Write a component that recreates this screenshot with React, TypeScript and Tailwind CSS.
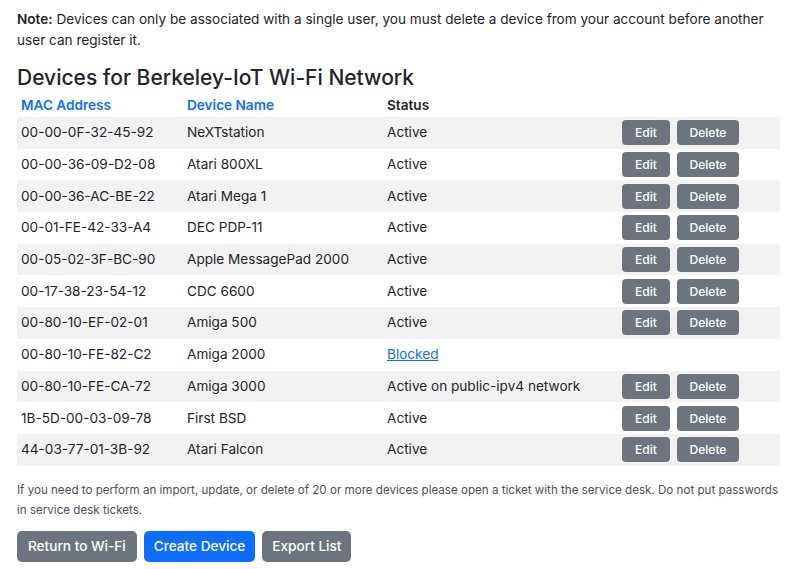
import React from "react";

const rows: [string, string, string][] = [
  ["00-00-0F-32-45-92", "NeXTstation", "Active"],
  ["00-00-36-09-D2-08", "Atari 800XL", "Active"],
  ["00-00-36-AC-BE-22", "Atari Mega 1", "Active"],
  ["00-01-FE-42-33-A4", "DEC PDP-11", "Active"],
  ["00-05-02-3F-BC-90", "Apple MessagePad 2000", "Active"],
  ["00-17-38-23-54-12", "CDC 6600", "Active"],
  ["00-80-10-EF-02-01", "Amiga 500", "Active"],
  ["00-80-10-FE-82-C2", "Amiga 2000", "Blocked"],
  ["00-80-10-FE-CA-72", "Amiga 3000", "Active on public-ipv4 network"],
  ["1B-5D-00-03-09-78", "First BSD", "Active"],
  ["44-03-77-01-3B-92", "Atari Falcon", "Active"],
];

export default function App() {
  return (
    <div className="px-[17px] pt-[9px] text-[13.6px] leading-[21px] text-[#212529]" style={{ fontFamily: "Inter, 'Noto Sans', sans-serif" }}>
      <p>
        <b className="font-semibold">Note:</b> Devices can only be associated with a single user, you must delete a device from your account before another user can register it.
      </p>
      <h2 className="mt-[14px] text-[21px] leading-[26px] font-medium">Devices for Berkeley-IoT Wi-Fi Network</h2>
      <table className="mt-[3px] w-[763px] border-collapse">
        <thead>
          <tr className="h-[23px] text-left font-semibold">
            <th className="w-[166px] px-1 py-0 font-semibold text-[#0d6efd]">MAC Address</th>
            <th className="w-[200px] px-1 py-0 font-semibold text-[#0d6efd]">Device Name</th>
            <th className="w-[235px] px-1 py-0 font-semibold">Status</th>
            <th></th>
          </tr>
        </thead>
        <tbody>
          {rows.map((r, i) => (
            <tr key={i} className={`h-[31.7px] ${i % 2 === 0 ? "bg-[#f2f2f2]" : ""}`}>
              <td className="px-1">{r[0]}</td>
              <td className="px-1">{r[1]}</td>
              <td className="px-1">
                {r[2] === "Blocked" ? <a className="text-[#0d6efd] underline">Blocked</a> : r[2]}
              </td>
              <td className="px-1">
                {r[2] !== "Blocked" && (
                  <div className="flex gap-[7px]">
                    <button className="h-[25px] w-[48px] rounded-[4px] bg-[#6c757d] text-[12px] font-medium text-white">Edit</button>
                    <button className="h-[25px] w-[62px] rounded-[4px] bg-[#6c757d] text-[12px] font-medium text-white">Delete</button>
                  </div>
                )}
              </td>
            </tr>
          ))}
        </tbody>
      </table>
      <p className="mt-[14px] text-[11.6px] leading-[20px] text-[#495057]">
        If you need to perform an import, update, or delete of 20 or more devices please open a ticket with the service desk. Do not put passwords in service desk tickets.
      </p>
      <div className="mt-[11px] flex gap-[7px]">
        <button className="h-[31px] rounded-[5px] bg-[#6c757d] px-[11px] text-[13.6px] font-medium text-white">Return to Wi-Fi</button>
        <button className="h-[31px] rounded-[5px] bg-[#0d6efd] px-[10px] text-[13.6px] font-medium text-white">Create Device</button>
        <button className="h-[31px] rounded-[5px] bg-[#6c757d] px-[10px] text-[13.6px] font-medium text-white">Export List</button>
      </div>
    </div>
  );
}
